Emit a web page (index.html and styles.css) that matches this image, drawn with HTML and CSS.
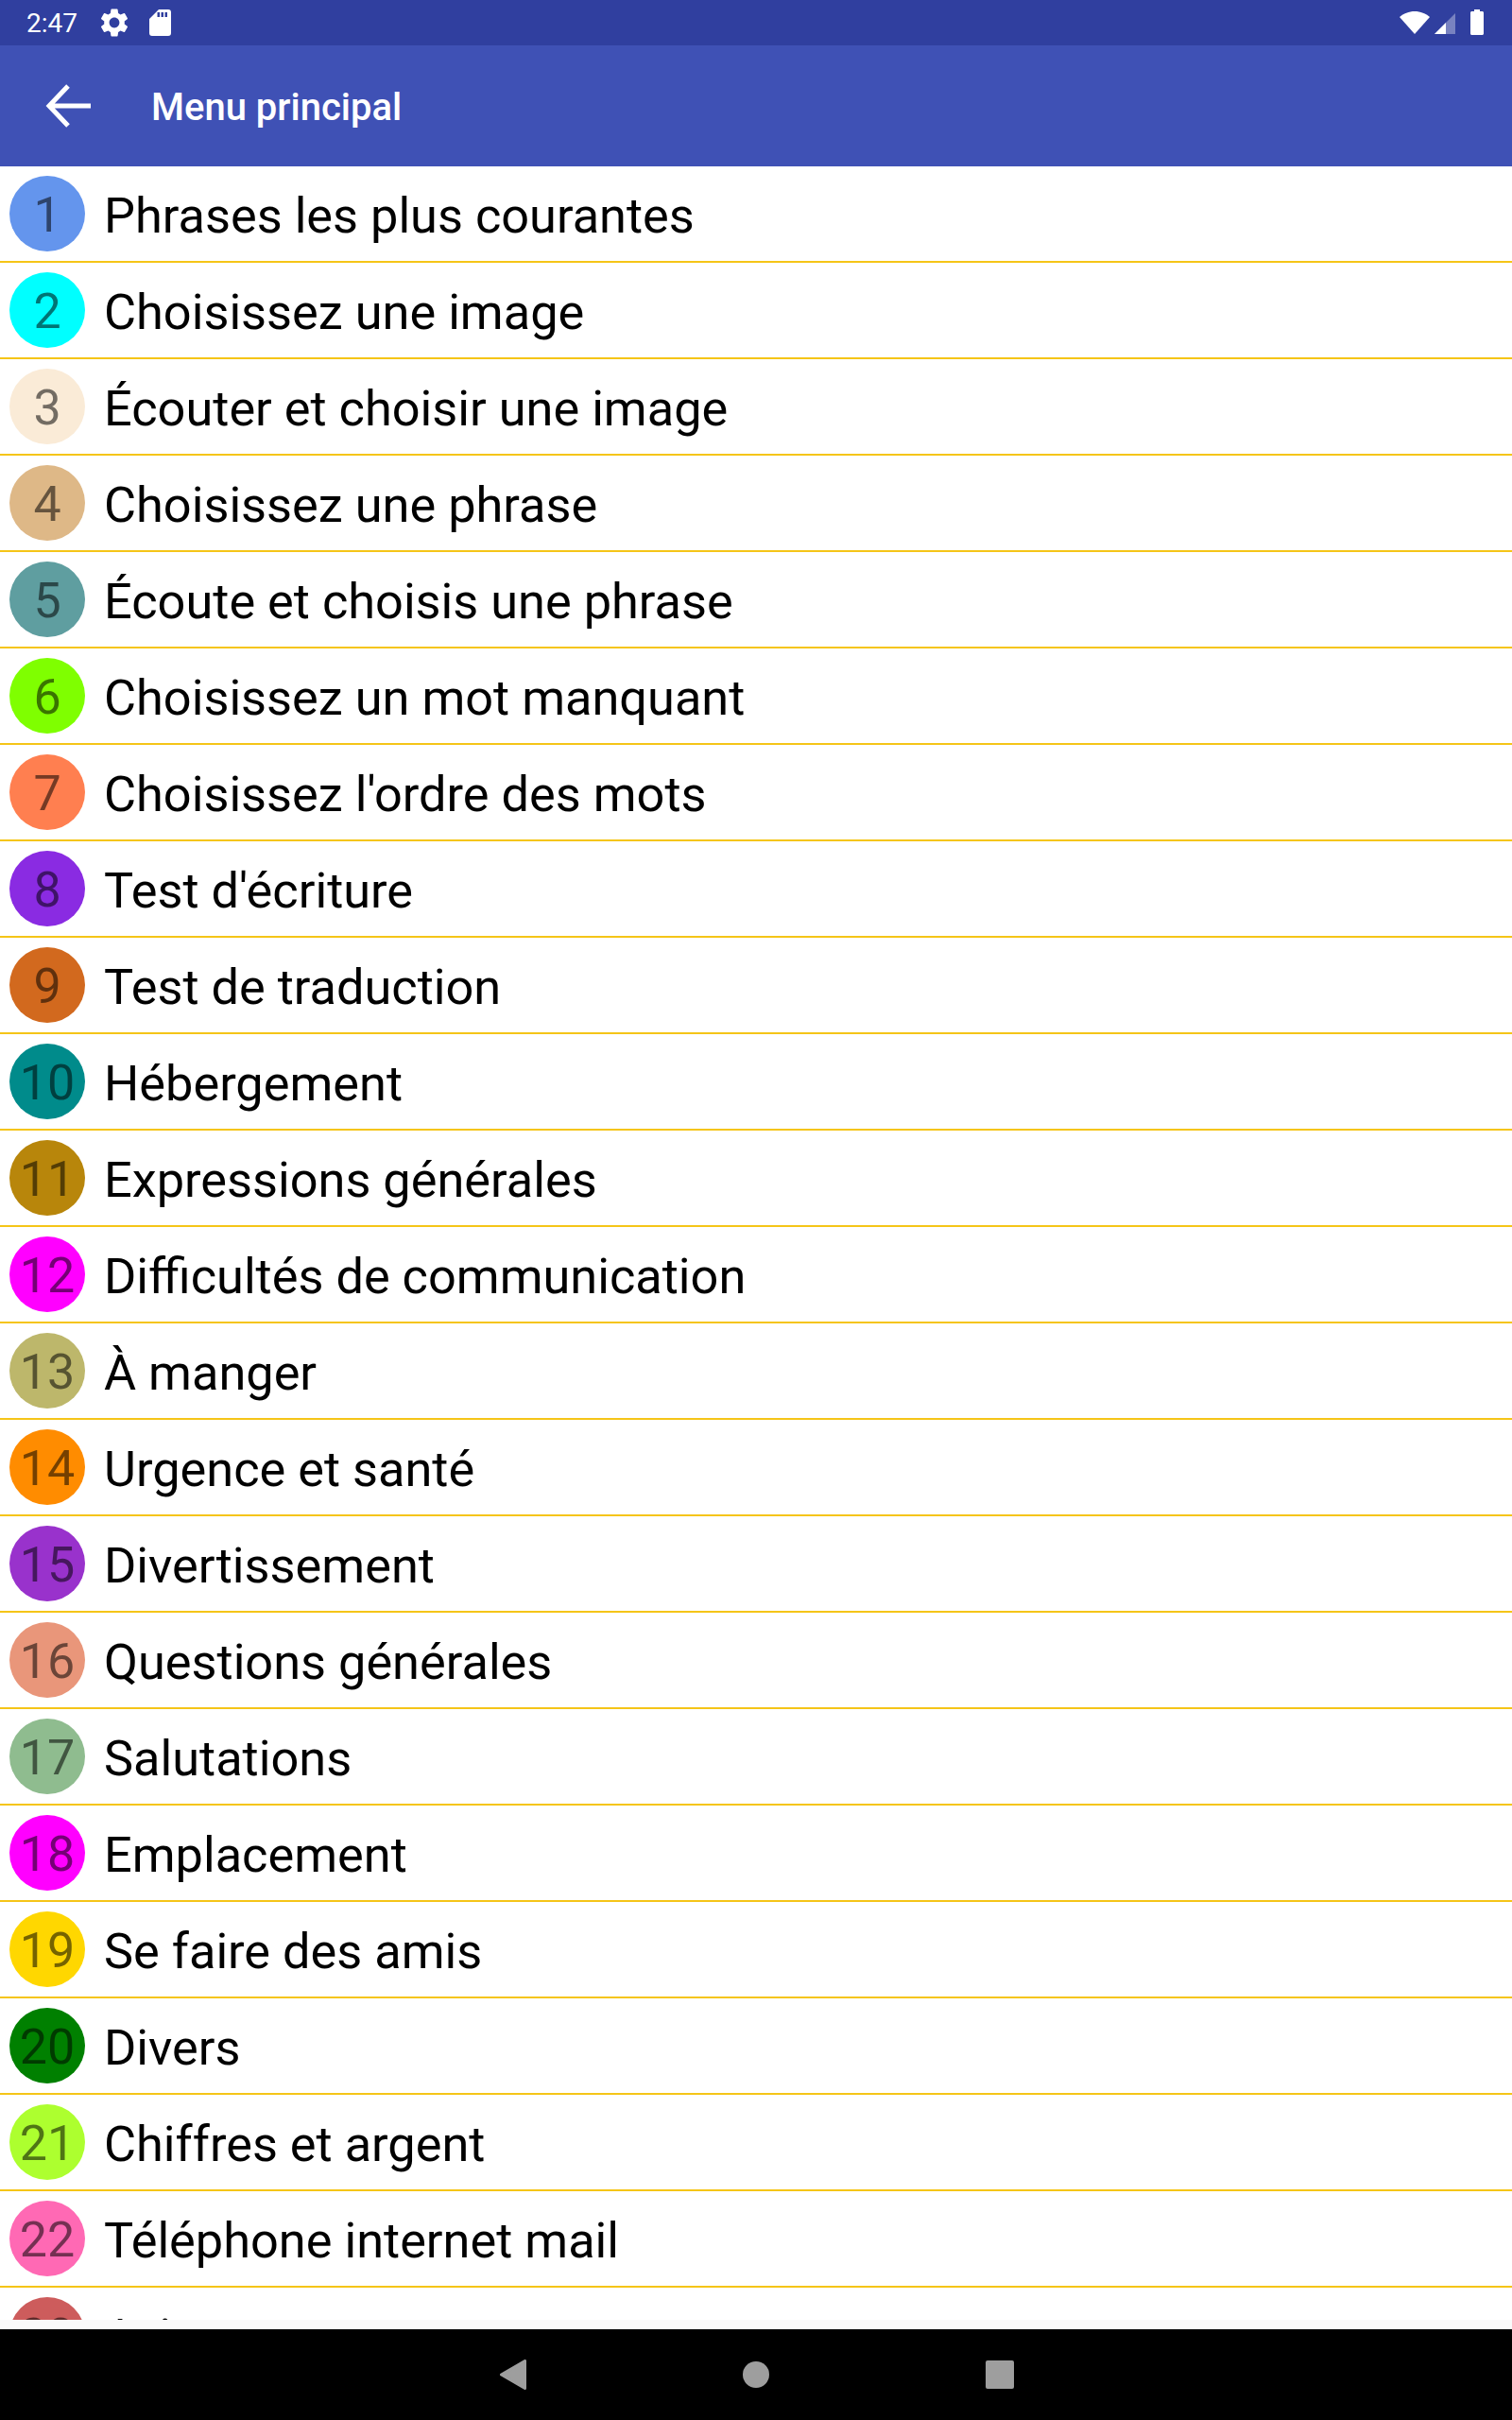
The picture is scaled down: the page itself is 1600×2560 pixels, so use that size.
FILE: index.html
```html
<!DOCTYPE html>
<html lang="fr">
<head>
    <meta charset="UTF-8">
    <meta name="viewport" content="width=device-width, initial-scale=1.0">
    <title>Menu principal</title>
    <link rel="stylesheet" href="styles.css">
</head>
<body>
    <div class="status-bar">
        <div class="status-left">
            <span class="clock">2:47</span>
            <svg class="icon-gear" width="36" height="36" viewBox="0 0 24 24"><path fill="#fff" d="M19.14 12.94c.04-.3.06-.61.06-.94 0-.32-.02-.64-.07-.94l2.03-1.58c.18-.14.23-.41.12-.61l-1.92-3.32c-.12-.22-.37-.29-.59-.22l-2.39.96c-.5-.38-1.03-.7-1.62-.94l-.36-2.54c-.04-.24-.24-.41-.48-.41h-3.84c-.24 0-.43.17-.47.41l-.36 2.54c-.59.24-1.13.57-1.62.94l-2.39-.96c-.22-.08-.47 0-.59.22L2.74 8.87c-.12.21-.08.47.12.61l2.03 1.58c-.05.3-.09.63-.09.94s.02.64.07.94l-2.03 1.58c-.18.14-.23.41-.12.61l1.92 3.32c.12.22.37.29.59.22l2.39-.96c.5.38 1.03.7 1.62.94l.36 2.54c.05.24.24.41.48.41h3.84c.24 0 .44-.17.47-.41l.36-2.54c.59-.24 1.13-.56 1.62-.94l2.39.96c.22.08.47 0 .59-.22l1.92-3.32c.12-.22.07-.47-.12-.61l-2.01-1.58zM12 15.6c-1.98 0-3.6-1.62-3.6-3.6s1.62-3.6 3.6-3.6 3.6 1.62 3.6 3.6-1.62 3.6-3.6 3.6z"/></svg>
            <svg class="icon-sd" width="23" height="28" viewBox="0 0 23 28"><path fill="#fff" fill-rule="evenodd" d="M10 0h10a3 3 0 0 1 3 3v22a3 3 0 0 1-3 3H3a3 3 0 0 1-3-3V10zM8.500 3v5H11V3zM12.500 3v5H15V3zM16.500 3v5H19V3z"/></svg>
        </div>
        <div class="status-right">
            <svg class="icon-wifi" width="32" height="24" viewBox="0 0 32 24"><path fill="#fff" d="M16 24 0 6C4 2.500 10 0 16 0s12 2.500 16 6z"/></svg>
            <svg class="icon-signal" width="22" height="22" viewBox="0 0 22 22"><path fill="#fff" fill-opacity="0.35" d="M22 0v22H0z"/><path fill="#fff" d="M12 10v12H0z"/></svg>
            <svg class="icon-battery" width="14" height="27" viewBox="0 0 14 27"><path fill="#fff" d="M4 0h6v2h2.500c.8 0 1.500.7 1.500 1.500v22c0 .8-.7 1.500-1.500 1.500h-11C.7 27 0 26.300 0 25.500v-22C0 2.700.7 2 1.500 2H4z"/></svg>
        </div>
    </div>

    <div class="app-bar">
        <svg class="icon-back" width="48" height="48" viewBox="0 0 48 48"><path fill="none" stroke="#fff" stroke-width="5" d="M49 24H5M24 3 4 24l20 21"/></svg>
        <h1>Menu principal</h1>
    </div>

    <div class="menu-list">
        <div class="menu-row"><span class="num c1">1</span><span class="label">Phrases les plus courantes</span></div>
        <div class="menu-row"><span class="num c2">2</span><span class="label">Choisissez une image</span></div>
        <div class="menu-row"><span class="num c3">3</span><span class="label">Écouter et choisir une image</span></div>
        <div class="menu-row"><span class="num c4">4</span><span class="label">Choisissez une phrase</span></div>
        <div class="menu-row"><span class="num c5">5</span><span class="label">Écoute et choisis une phrase</span></div>
        <div class="menu-row"><span class="num c6">6</span><span class="label">Choisissez un mot manquant</span></div>
        <div class="menu-row"><span class="num c7">7</span><span class="label">Choisissez l'ordre des mots</span></div>
        <div class="menu-row"><span class="num c8">8</span><span class="label">Test d'écriture</span></div>
        <div class="menu-row"><span class="num c9">9</span><span class="label">Test de traduction</span></div>
        <div class="menu-row"><span class="num c10">10</span><span class="label">Hébergement</span></div>
        <div class="menu-row"><span class="num c11">11</span><span class="label">Expressions générales</span></div>
        <div class="menu-row"><span class="num c12">12</span><span class="label">Difficultés de communication</span></div>
        <div class="menu-row"><span class="num c13">13</span><span class="label">À manger</span></div>
        <div class="menu-row"><span class="num c14">14</span><span class="label">Urgence et santé</span></div>
        <div class="menu-row"><span class="num c15">15</span><span class="label">Divertissement</span></div>
        <div class="menu-row"><span class="num c16">16</span><span class="label">Questions générales</span></div>
        <div class="menu-row"><span class="num c17">17</span><span class="label">Salutations</span></div>
        <div class="menu-row"><span class="num c18">18</span><span class="label">Emplacement</span></div>
        <div class="menu-row"><span class="num c19">19</span><span class="label">Se faire des amis</span></div>
        <div class="menu-row"><span class="num c20">20</span><span class="label">Divers</span></div>
        <div class="menu-row"><span class="num c21">21</span><span class="label">Chiffres et argent</span></div>
        <div class="menu-row"><span class="num c22">22</span><span class="label">Téléphone internet mail</span></div>
        <div class="menu-row"><span class="num c23">23</span><span class="label">Avion</span></div>
    </div>
    <div class="list-end"></div>

    <div class="nav-bar">
        <svg width="28" height="32" viewBox="0 0 28 32"><path fill="#9e9e9e" stroke="#9e9e9e" stroke-width="3" stroke-linejoin="round" d="M26.500 1.500v29L1.500 16z"/></svg>
        <svg width="28" height="28" viewBox="0 0 28 28"><circle cx="14" cy="14" r="14" fill="#9e9e9e"/></svg>
        <svg width="30" height="30" viewBox="0 0 30 30"><rect width="30" height="30" rx="2" fill="#9e9e9e"/></svg>
    </div>
</body>
</html>
```

FILE: styles.css
```css
body {
    font-family: Roboto, "Liberation Sans", sans-serif;
    margin: 0;
    padding: 0;
    height: 2560px;
    display: flex;
    flex-direction: column;
    background-color: #fff;
    overflow: hidden;
}
.status-bar {
    height: 48px;
    background-color: #303f9f;
    color: #fff;
    display: flex;
    justify-content: space-between;
    align-items: center;
    padding: 0 30px 0 28px;
}
.status-left {
    display: flex;
    align-items: center;
}
.status-right {
    display: flex;
    align-items: center;
}
.clock {
    font-size: 28px;
}
.icon-gear {
    margin-left: 21px;
}
.icon-sd {
    margin-left: 19px;
}
.icon-signal {
    margin-left: 5px;
    margin-top: 2px;
}
.icon-battery {
    margin-left: 16px;
    margin-top: -1px;
}
.app-bar {
    height: 128px;
    background-color: #3f51b5;
    display: flex;
    align-items: center;
    padding-left: 48px;
}
.app-bar h1 {
    margin: 0 0 0 64px;
    padding-top: 2px;
    color: #fff;
    font-size: 40px;
    font-weight: 500;
}
.menu-list {
    height: 2278px;
    overflow: hidden;
}
.menu-row {
    height: 100px;
    border-bottom: 2px solid #f5c518;
    display: flex;
    align-items: center;
    padding-left: 10px;
}
.num {
    width: 80px;
    height: 80px;
    box-sizing: border-box;
    padding-top: 2px;
    border-radius: 50%;
    display: flex;
    justify-content: center;
    align-items: center;
    flex-shrink: 0;
    font-size: 52px;
    color: rgba(0, 0, 0, 0.54);
}
.label {
    margin-left: 20px;
    padding-top: 3px;
    font-size: 52.3px;
    color: #000;
}
.list-end {
    height: 10px;
    background-color: #fafafa;
}
.nav-bar {
    height: 96px;
    background-color: #000;
    display: flex;
    justify-content: center;
    align-items: center;
    gap: 229px;
    padding-left: 2px;
}
.c1 { background-color: #6495ed; }
.c2 { background-color: #00ffff; }
.c3 { background-color: #faebd7; }
.c4 { background-color: #deb887; }
.c5 { background-color: #5f9ea0; }
.c6 { background-color: #7fff00; }
.c7 { background-color: #ff7f50; }
.c8 { background-color: #8a2be2; }
.c9 { background-color: #d2691e; }
.c10 { background-color: #008b8b; }
.c11 { background-color: #b8860b; }
.c12 { background-color: #ff00ff; }
.c13 { background-color: #bdb76b; }
.c14 { background-color: #ff8c00; }
.c15 { background-color: #9932cc; }
.c16 { background-color: #e9967a; }
.c17 { background-color: #8fbc8f; }
.c18 { background-color: #ff00ff; }
.c19 { background-color: #ffd700; }
.c20 { background-color: #008000; }
.c21 { background-color: #adff2f; }
.c22 { background-color: #ff69b4; }
.c23 { background-color: #cd5c5c; }
```
